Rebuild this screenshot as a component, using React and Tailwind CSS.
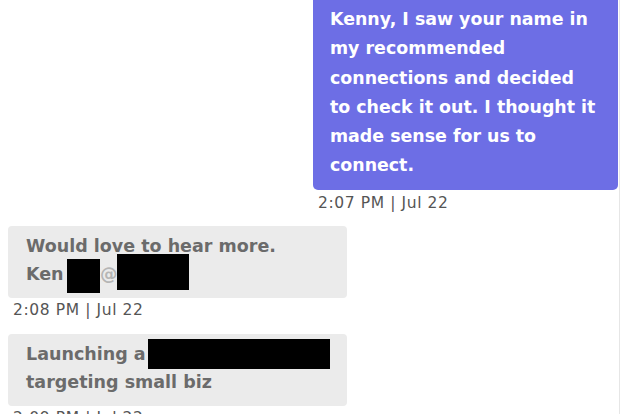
export default function App() {
  const font = { fontFamily: '"DejaVu Sans", sans-serif' };
  return (
    <div className="w-[622px] h-[414px] overflow-hidden bg-white relative" style={font}>
      <div className="absolute right-[2px] top-0 bottom-0 w-px bg-[#e6e6e6]" />
      <div className="flex flex-col">
        <div className="ml-[313px] w-[305px] bg-[#6d6ee5] rounded-b-[5px] pl-[17px] pr-[8px] pt-[5px] pb-[9px] text-white text-[17.4px] leading-[29.3px] font-semibold">
          Kenny, I saw your name in<br />
          my recommended<br />
          connections and decided<br />
          to check it out. I thought it<br />
          made sense for us to<br />
          connect.
        </div>
        <div className="ml-[318px] mt-[4px] text-[15.5px] leading-[18px] tracking-[0.6px] text-[#555]">2:07 PM | Jul 22</div>
        <div className="ml-[8px] mt-[14px] w-[339px] bg-[#ebebeb] rounded-[4px] pl-[18px] pt-[6px] pb-[10px] text-[#6b6b6b] text-[17.5px] leading-[28px] font-semibold">
          Would love to hear more.<br />
          <span className="inline-block w-[41px] whitespace-nowrap align-top">Ken</span>
          <span className="inline-block w-[33px] h-[34px] bg-black align-top -mt-[1px] -mb-[5px]" />
          <span className="inline-block w-[17px] align-top text-[#b5b5b5] overflow-hidden">@</span>
          <span className="inline-block w-[72px] h-[36px] bg-black align-top -mt-[6px] -mb-[2px]" />
        </div>
        <div className="ml-[13px] mt-[3px] text-[15.5px] leading-[18px] tracking-[0.6px] text-[#555]">2:08 PM | Jul 22</div>
        <div className="ml-[8px] mt-[15px] w-[339px] bg-[#ebebeb] rounded-[4px] pl-[18px] pt-[6px] pb-[10px] text-[#6b6b6b] text-[17.5px] leading-[28px] font-semibold">
          <span className="inline-block w-[122px] whitespace-nowrap align-top">Launching a</span>
          <span className="inline-block w-[182px] h-[30px] bg-black align-top -mt-[1px] -mb-[1px]" />
          <br />
          targeting small biz
        </div>
        <div className="ml-[13px] mt-[3px] text-[15.5px] leading-[18px] tracking-[0.6px] text-[#555]">2:09 PM | Jul 22</div>
      </div>
    </div>
  );
}
